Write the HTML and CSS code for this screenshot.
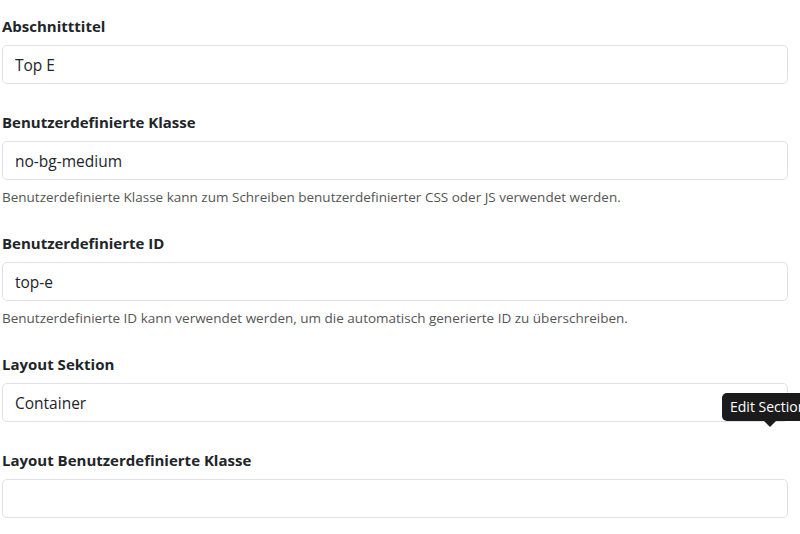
FILE: index.html
```
<!DOCTYPE html>
<html lang="de">
<head>
    <meta charset="UTF-8">
    <meta name="viewport" content="width=device-width, initial-scale=1.0">
    <title>Sektion bearbeiten</title>
    <link rel="stylesheet" href="styles.css">
</head>
<body>

<form class="section-form">
    <div class="field">
        <label for="sectionTitle">Abschnitttitel</label>
        <input type="text" id="sectionTitle" value="Top E">
    </div>

    <div class="field">
        <label for="customClass">Benutzerdefinierte Klasse</label>
        <input type="text" id="customClass" value="no-bg-medium">
        <small class="help">Benutzerdefinierte Klasse kann zum Schreiben benutzerdefinierter CSS oder JS verwendet werden.</small>
    </div>

    <div class="field">
        <label for="customId">Benutzerdefinierte ID</label>
        <input type="text" id="customId" value="top-e">
        <small class="help">Benutzerdefinierte ID kann verwendet werden, um die automatisch generierte ID zu überschreiben.</small>
    </div>

    <div class="field">
        <label for="layoutSection">Layout Sektion</label>
        <div class="select-wrap">
            <input type="text" id="layoutSection" value="Container">
            <span class="tooltip">Edit Section</span>
        </div>
    </div>

    <div class="field">
        <label for="layoutClass">Layout Benutzerdefinierte Klasse</label>
        <input type="text" id="layoutClass" value="">
    </div>
</form>

</body>
</html>
```

FILE: styles.css
```
body {
    margin: 0;
    background-color: #fff;
    font-family: "Open Sans", "Noto Sans", Arial, sans-serif;
    color: #212529;
    overflow: hidden;
}

.section-form {
    padding: 14px 12px 0 2px;
}

.field {
    margin-bottom: 26px;
}

label {
    display: block;
    font-weight: 700;
    font-size: 15px;
    line-height: 24px;
    margin-bottom: 7px;
}

input {
    display: block;
    width: 100%;
    height: 39px;
    padding: 0 12px;
    box-sizing: border-box;
    border: 1px solid #dee2e6;
    border-radius: 5px;
    font-family: inherit;
    font-size: 15.5px;
    color: #212529;
    background-color: #fff;
}

.help {
    display: block;
    margin-top: 7px;
    margin-bottom: -3px;
    font-size: 13.5px;
    line-height: 21px;
    color: #555;
}

.select-wrap {
    position: relative;
}

.tooltip {
    position: absolute;
    left: 720px;
    top: 10px;
    padding: 4px 8px;
    background-color: #1b1b1b;
    color: #fff;
    font-size: 14px;
    line-height: 20px;
    border-radius: 5px;
    white-space: nowrap;
}

.tooltip::after {
    content: "";
    position: absolute;
    left: 42px;
    bottom: -6px;
    border-left: 6px solid transparent;
    border-right: 6px solid transparent;
    border-top: 6px solid #1b1b1b;
}
```
